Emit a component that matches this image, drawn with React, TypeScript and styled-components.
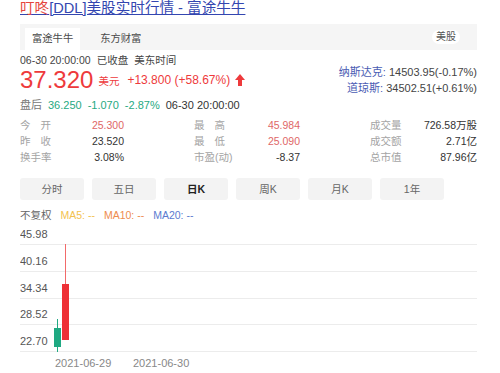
import React from "react";
import styled, { createGlobalStyle } from "styled-components";

const GlobalStyle = createGlobalStyle`
  html, body {
    margin: 0;
    padding: 0;
    background: #ffffff;
  }
  body {
    font-family: "Liberation Sans", "Noto Sans CJK SC", sans-serif;
    color: #333333;
  }
`;

const RED = "#ee3a3c";
const GREEN = "#1fa982";

const Page = styled.div`
  width: 457px;
  padding: 0 23px 0 20px;
`;

const Title = styled.a`
  display: block;
  height: 17px;
  line-height: 17px;
  font-size: 14.6px;
  color: #3346b0;
  text-decoration: underline;
  white-space: nowrap;
`;

const Hot = styled.span`
  color: #e5453d;
`;

const TabBar = styled.div`
  margin-top: 7px;
  height: 26px;
  box-sizing: border-box;
  padding: 4px 17px 0 5px;
  background: #f5f5f5;
  display: flex;
  align-items: flex-start;
`;

const Tab = styled.div<{ $active?: boolean }>`
  height: 22px;
  line-height: 22px;
  padding: 0 ${(p) => (p.$active ? "7px" : "20px")};
  font-size: 10.3px;
  color: #4a4a4a;
  background: ${(p) => (p.$active ? "#ffffff" : "transparent")};
`;

const Spacer = styled.div`
  flex: 1;
`;

const MarketPill = styled.div`
  margin-top: 2px;
  height: 14px;
  line-height: 14px;
  padding: 0 4px;
  border-radius: 7px;
  background: #ffffff;
  font-size: 10px;
  color: #555;
`;

const TimeRow = styled.div`
  margin-top: 3px;
  height: 14px;
  line-height: 14px;
  font-size: 10.5px;
  color: #444;
  display: flex;
  gap: 6px;
`;

const PriceSection = styled.div`
  height: 31px;
  display: flex;
  justify-content: space-between;
  align-items: flex-start;
`;

const PriceLine = styled.div`
  display: flex;
  align-items: center;
  height: 26px;
  color: ${RED};
`;

const Price = styled.span`
  font-size: 24px;
  line-height: 26px;
`;

const Currency = styled.span`
  margin-left: 5px;
  font-size: 10.5px;
`;

const Change = styled.span`
  margin-left: 8px;
  font-size: 12px;
`;

const UpArrow = styled.svg`
  margin-left: 5px;
  width: 10px;
  height: 12px;
`;

const IndexList = styled.div`
  margin-top: -3px;
  display: flex;
  flex-direction: column;
  align-items: flex-end;
`;

const IndexRow = styled.div`
  height: 16px;
  line-height: 16px;
  font-size: 11px;
  color: #444;
  white-space: nowrap;
`;

const IndexName = styled.span`
  color: #4a5cb3;
`;

const AfterRow = styled.div`
  height: 14px;
  line-height: 14px;
  font-size: 11px;
  display: flex;
  gap: 6px;
  color: #444;
`;

const Tone = styled.span<{ $tone: "up" | "down" | "muted" | "plain" }>`
  color: ${(p) =>
    p.$tone === "up"
      ? "#e06767"
      : p.$tone === "down"
      ? GREEN
      : p.$tone === "muted"
      ? "#777"
      : "#333"};
`;

const StatsGrid = styled.div`
  margin-top: 5px;
  display: grid;
  grid-template-columns: 104px 106px 107px;
  justify-content: space-between;
`;

const StatCell = styled.div`
  height: 16px;
  line-height: 16px;
  display: flex;
  justify-content: space-between;
  font-size: 10.5px;
  white-space: nowrap;
`;

const StatLabel = styled.span`
  width: 31px;
  color: #a4a4a4;
  text-align: justify;
  text-align-last: justify;
`;

const PeriodRow = styled.div`
  margin-top: 13px;
  display: flex;
  gap: 8px;
`;

const PeriodButton = styled.div<{ $active?: boolean }>`
  width: 64px;
  height: 22px;
  line-height: 22px;
  border-radius: 3px;
  background: #f3f3f3;
  text-align: center;
  font-size: 10.5px;
  color: ${(p) => (p.$active ? "#222" : "#666")};
  font-weight: ${(p) => (p.$active ? 700 : 400)};
`;

const Legend = styled.div`
  margin-top: 8px;
  height: 14px;
  line-height: 14px;
  display: flex;
  gap: 9px;
  font-size: 10.5px;
  color: #666;
`;

const LegendItem = styled.span<{ $color: string }>`
  color: ${(p) => p.$color};
`;

const Chart = styled.svg`
  display: block;
  width: 457px;
  height: 151px;
`;

const stats: [string, string, "up" | "plain"][] = [
  ["今开", "25.300", "up"],
  ["最高", "45.984", "up"],
  ["成交量", "726.58万股", "plain"],
  ["昨收", "23.520", "plain"],
  ["最低", "25.090", "up"],
  ["成交额", "2.71亿", "plain"],
  ["换手率", "3.08%", "plain"],
  ["市盈(动)", "-8.37", "plain"],
  ["总市值", "87.96亿", "plain"],
];

const periods = ["分时", "五日", "日K", "周K", "月K", "1年"];

const axis = [
  { label: "45.98", y: 22 },
  { label: "40.16", y: 49 },
  { label: "34.34", y: 76 },
  { label: "28.52", y: 102 },
  { label: "22.70", y: 129 },
];

export default function App() {
  return (
    <>
      <GlobalStyle />
      <Page>
        <Title>
          <Hot>叮咚</Hot>[DDL]美股实时行情 - 富途牛牛
        </Title>

        <TabBar>
          <Tab $active>富途牛牛</Tab>
          <Tab>东方财富</Tab>
          <Spacer />
          <MarketPill>美股</MarketPill>
        </TabBar>

        <TimeRow>
          <span>06-30 20:00:00</span>
          <span>已收盘</span>
          <span>美东时间</span>
        </TimeRow>

        <PriceSection>
          <PriceLine>
            <Price>37.320</Price>
            <Currency>美元</Currency>
            <Change>+13.800 (+58.67%)</Change>
            <UpArrow viewBox="0 0 10 12">
              <polygon points="5,0 10,6 0,6" fill={RED} />
              <rect x="3" y="5.5" width="4" height="6.5" fill={RED} />
            </UpArrow>
          </PriceLine>
          <IndexList>
            <IndexRow>
              <IndexName>纳斯达克:</IndexName> 14503.95(-0.17%)
            </IndexRow>
            <IndexRow>
              <IndexName>道琼斯:</IndexName> 34502.51(+0.61%)
            </IndexRow>
          </IndexList>
        </PriceSection>

        <AfterRow>
          <Tone $tone="muted">盘后</Tone>
          <Tone $tone="down">36.250</Tone>
          <Tone $tone="down">-1.070</Tone>
          <Tone $tone="down">-2.87%</Tone>
          <Tone $tone="plain">06-30 20:00:00</Tone>
        </AfterRow>

        <StatsGrid>
          {stats.map(([label, value, tone]) => (
            <StatCell key={label}>
              <StatLabel>{label}</StatLabel>
              <Tone $tone={tone}>{value}</Tone>
            </StatCell>
          ))}
        </StatsGrid>

        <PeriodRow>
          {periods.map((p) => (
            <PeriodButton key={p} $active={p === "日K"}>
              {p}
            </PeriodButton>
          ))}
        </PeriodRow>

        <Legend>
          <span>不复权</span>
          <LegendItem $color="#f3c24e">MA5: --</LegendItem>
          <LegendItem $color="#ee8c4e">MA10: --</LegendItem>
          <LegendItem $color="#5b7bd0">MA20: --</LegendItem>
        </Legend>

        <Chart viewBox="0 0 457 151">
          {axis.map((a) => (
            <g key={a.label}>
              <line x1="0" x2="457" y1={a.y + 0.5} y2={a.y + 0.5} stroke="#ececec" strokeWidth="1" />
              <text
                x="0"
                y={a.y - 6}
                fontSize="11"
                fill="#555"
                fontFamily="Liberation Sans, sans-serif"
              >
                {a.label}
              </text>
            </g>
          ))}

          {/* 06-29 candle: down day */}
          <line x1="37.5" x2="37.5" y1="97" y2="130" stroke={GREEN} strokeWidth="1" />
          <rect x="34" y="106" width="7" height="19" fill={GREEN} />

          {/* 06-30 candle: up day */}
          <line x1="45.5" x2="45.5" y1="22" y2="118" stroke="#f26a6a" strokeWidth="1" />
          <rect x="42" y="62" width="7" height="56" fill="#ee3036" />

          <text x="35" y="145" fontSize="11" fill="#888" fontFamily="Liberation Sans, sans-serif">
            2021-06-29
          </text>
          <text x="113" y="145" fontSize="11" fill="#888" fontFamily="Liberation Sans, sans-serif">
            2021-06-30
          </text>
        </Chart>
      </Page>
    </>
  );
}
